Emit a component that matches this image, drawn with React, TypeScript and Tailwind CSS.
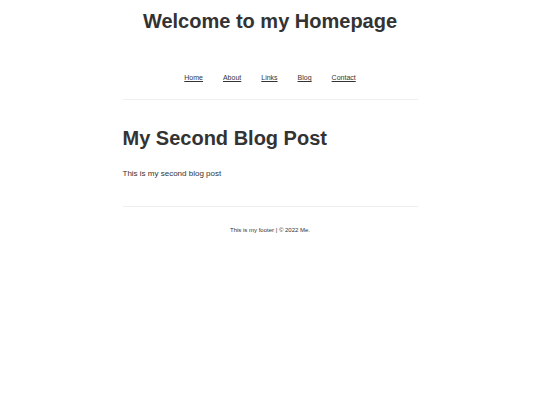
import React from 'react';

const links = ['Home', 'About', 'Links', 'Blog', 'Contact'];

export default function App() {
  return (
    <div className="min-h-screen bg-white text-[#333] font-['Liberation_Sans',Arial,sans-serif]">
      <div className="w-[295px] mx-auto pt-[9px]">
        <header>
          <h1 className="text-[20px] leading-[25px] font-bold text-center">Welcome to my Homepage</h1>
          <nav className="mt-[39px] flex justify-center gap-[20px] text-[7px] leading-[10px]">
            {links.map((l) => (
              <a key={l} href="#" className="underline text-[#333]">
                {l}
              </a>
            ))}
          </nav>
        </header>
        <hr className="mt-[16px] border-0 border-t border-[#eee]" />
        <main>
          <h2 className="mt-[26px] text-[20px] leading-[25px] font-bold">My Second Blog Post</h2>
          <p className="mt-[17px] text-[8px] leading-[12px]">This is my second blog post</p>
        </main>
        <hr className="mt-[26px] border-0 border-t border-[#eee]" />
        <footer className="mt-[18px] text-center text-[6px] leading-[10px]">This is my footer | © 2022 Me.</footer>
      </div>
    </div>
  );
}
